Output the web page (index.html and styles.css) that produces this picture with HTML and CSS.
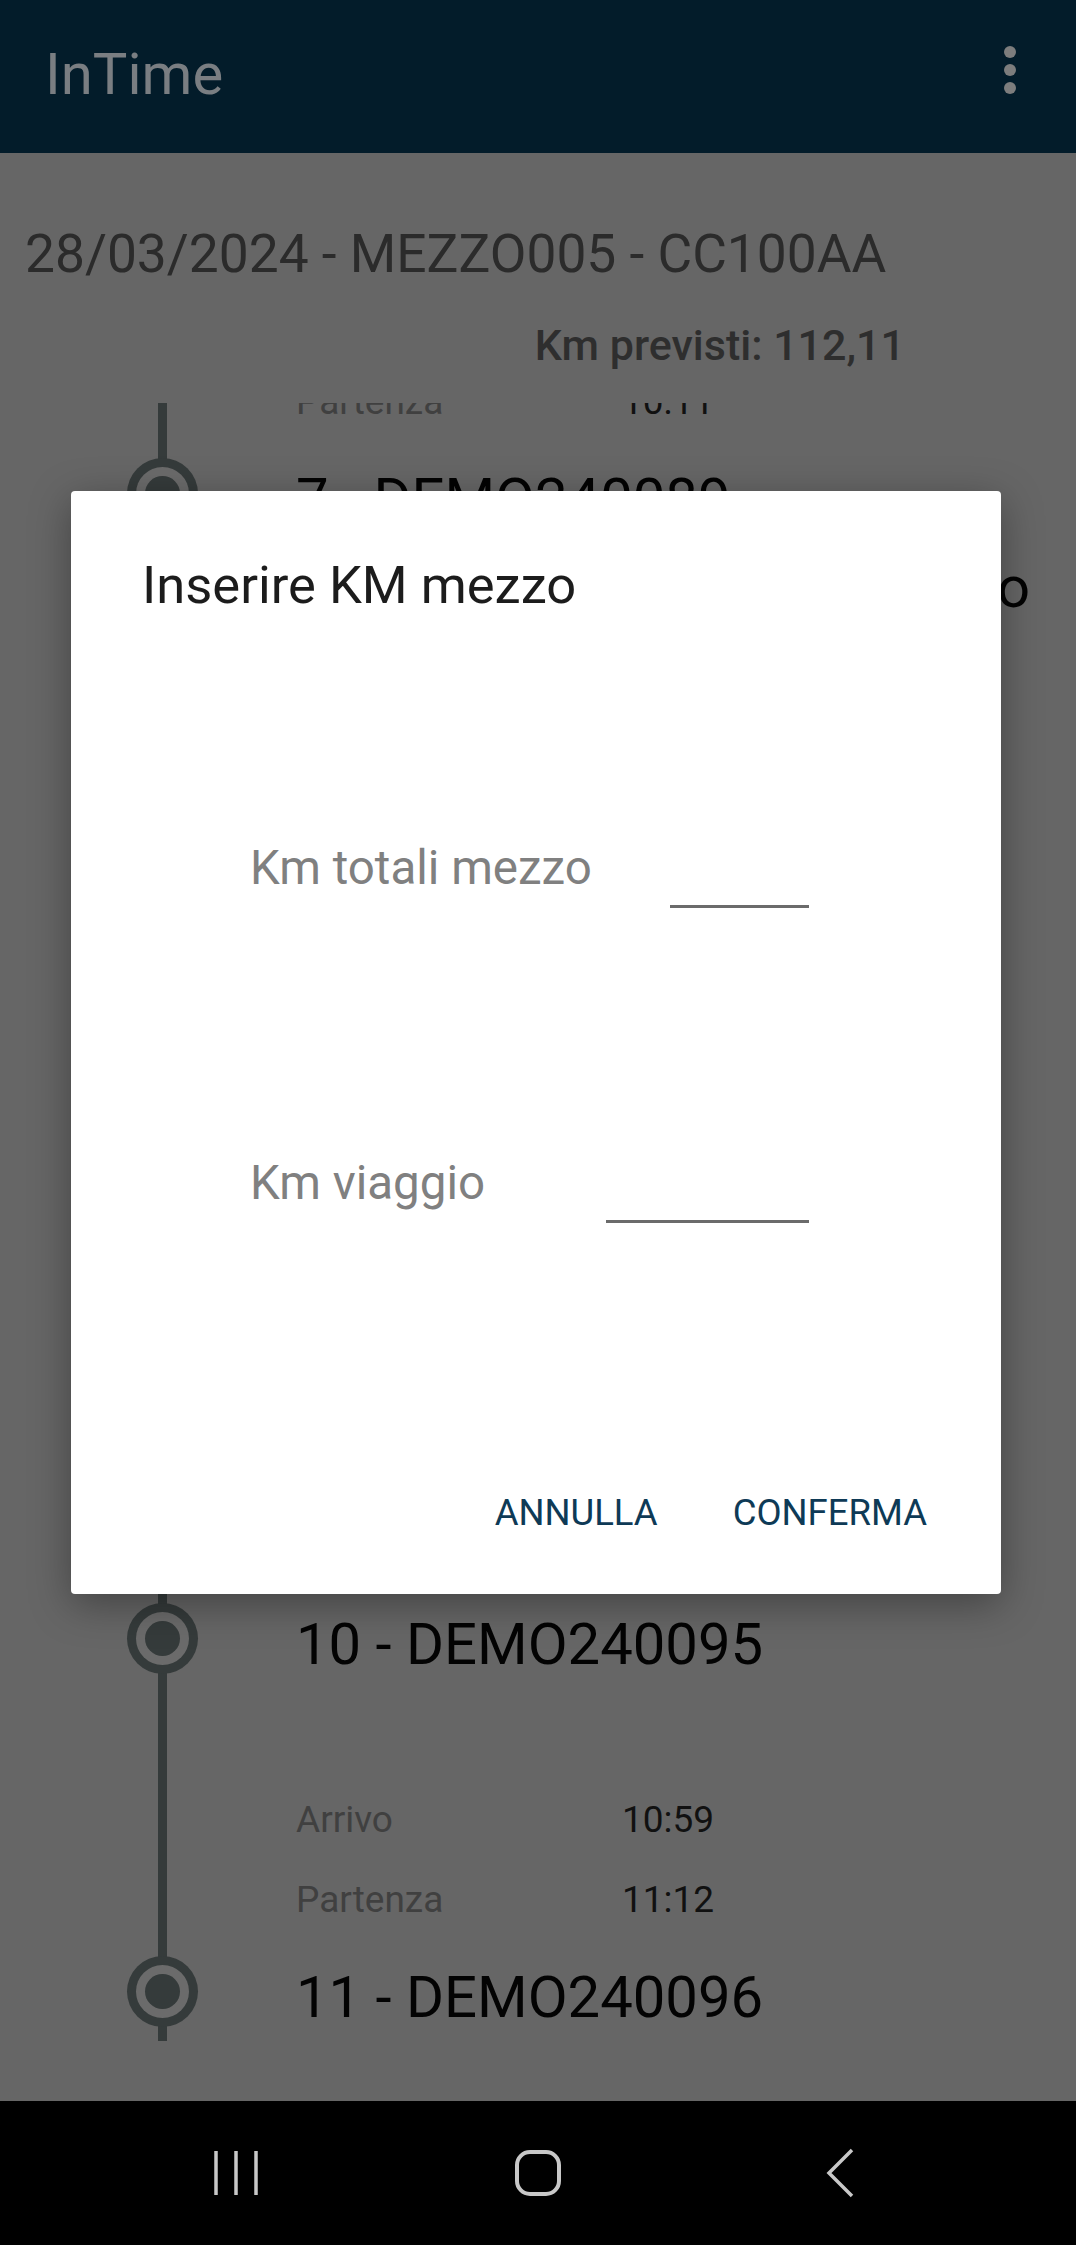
FILE: index.html
```html
<!DOCTYPE html>
<html>
<head>
	<meta charset="utf-8">
	<title>InTime</title>
	<link rel="stylesheet" href="styles.css">
</head>
<body>
<div class="phone">
	<div class="screen">
		<div class="toolbar">
			<div class="app-title">InTime</div>
			<div class="kebab"><span></span><span></span><span></span></div>
		</div>

		<div class="trip-head">28/03/2024 - MEZZO005 - CC100AA</div>
		<div class="km">Km previsti: 112,11</div>

		<div class="timeline">
			<div class="stops">
				<div class="row time-row"><div class="rail"></div><div><span class="label">Partenza</span><span class="time">10:11</span></div></div>
				<div class="row title-row"><div class="rail"><div class="node"></div></div><div>7 - DEMO240089</div></div>
				<div class="row extra-row"><div class="rail"></div><div class="extra">Arezzo</div></div>
				<div class="row spacer-lg"><div class="rail"></div><div></div></div>

				<div class="row time-row"><div class="rail"></div><div><span class="label">Arrivo</span><span class="time">10:24</span></div></div>
				<div class="row time-row"><div class="rail"></div><div><span class="label">Partenza</span><span class="time">10:30</span></div></div>
				<div class="row title-row"><div class="rail"><div class="node"></div></div><div>8 - DEMO240091</div></div>
				<div class="row spacer"><div class="rail"></div><div></div></div>

				<div class="row time-row"><div class="rail"></div><div><span class="label">Arrivo</span><span class="time">10:38</span></div></div>
				<div class="row time-row"><div class="rail"></div><div><span class="label">Partenza</span><span class="time">10:44</span></div></div>
				<div class="row title-row"><div class="rail"><div class="node"></div></div><div>9 - DEMO240093</div></div>
				<div class="row spacer"><div class="rail"></div><div></div></div>

				<div class="row time-row"><div class="rail"></div><div><span class="label">Arrivo</span><span class="time">10:49</span></div></div>
				<div class="row time-row"><div class="rail"></div><div><span class="label">Partenza</span><span class="time">10:53</span></div></div>
				<div class="row title-row"><div class="rail"><div class="node"></div></div><div>10 - DEMO240095</div></div>
				<div class="row spacer"><div class="rail"></div><div></div></div>

				<div class="row time-row"><div class="rail"></div><div><span class="label">Arrivo</span><span class="time">10:59</span></div></div>
				<div class="row time-row"><div class="rail"></div><div><span class="label">Partenza</span><span class="time">11:12</span></div></div>
				<div class="row title-row last"><div class="rail"><div class="node"></div></div><div>11 - DEMO240096</div></div>
			</div>
		</div>

		<div class="overlay">
			<div class="dialog">
				<div class="dialog-title">Inserire KM mezzo</div>
				<div class="fields">
					<div class="field">
						<label>Km totali mezzo</label>
						<input type="text" class="input-short">
					</div>
					<div class="field">
						<label>Km viaggio</label>
						<input type="text" class="input-long">
					</div>
				</div>
				<div class="actions">
					<button>ANNULLA</button>
					<button>CONFERMA</button>
				</div>
			</div>
		</div>
	</div>

	<div class="navbar">
		<div class="nav-btn">
			<svg width="46" height="46" viewBox="0 0 46 46"><path d="M3 1V45M23 1V45M43 1V45" stroke="#c8c8c8" stroke-width="3.5" fill="none"/></svg>
		</div>
		<div class="nav-btn">
			<svg width="50" height="50" viewBox="0 0 50 50"><rect x="4" y="4" width="42" height="42" rx="13" stroke="#c8c8c8" stroke-width="4" fill="none"/></svg>
		</div>
		<div class="nav-btn">
			<svg width="32" height="50" viewBox="0 0 32 50"><path d="M28 2L5 25L28 48" stroke="#c8c8c8" stroke-width="3.5" fill="none"/></svg>
		</div>
	</div>
</div>
</body>
</html>
```
FILE: styles.css
```css
*{
	box-sizing: border-box;
}
body{
	margin: 0;
	width: 1076px;
	height: 2245px;
	overflow: hidden;
	background: #000;
	font-family: Roboto, "Liberation Sans", sans-serif;
}
.phone{
	display: flex;
	flex-direction: column;
	height: 2245px;
}
.screen{
	position: relative;
	flex: 1;
	display: flex;
	flex-direction: column;
	background: #666;
	overflow: hidden;
}

/* barra in alto */
.toolbar{
	flex: none;
	height: 153px;
	background: #031c2a;
	display: flex;
	align-items: center;
	justify-content: space-between;
	padding: 0 60px 6px 45px;
}
.app-title{
	font-size: 58px;
	line-height: 70px;
	color: #7a7e82;
}
.kebab{
	display: flex;
	flex-direction: column;
	gap: 6px;
	margin-bottom: 7px;
}
.kebab span{
	width: 12px;
	height: 12px;
	border-radius: 50%;
	background: #7d7d7d;
}

.trip-head{
	padding: 69px 0 0 25px;
	font-size: 53.3px;
	line-height: 64px;
	color: #2b2b2b;
}
.km{
	margin-top: 33px;
	padding-right: 171px;
	text-align: right;
	font-size: 43px;
	line-height: 52px;
	font-weight: 500;
	color: #2e2e2e;
}

/* lista fermate */
.timeline{
	flex: 1;
	margin-top: 32px;
	overflow: hidden;
}
.stops{
	margin-top: -41px;
}
.row{
	display: grid;
	grid-template-columns: 296px 1fr;
}
.rail{
	display: flex;
	align-items: center;
	padding-bottom: 11px;
	background: linear-gradient(#353b3b, #353b3b) 158px 0 / 9px 100% no-repeat;
}
.last .rail{
	background-size: 9px 101px;
}
.node{
	width: 35px;
	height: 35px;
	margin-left: 145px;
	border-radius: 50%;
	background: #353b3b;
	box-shadow: 0 0 0 9px #6b6b6b, 0 0 0 18px #353b3b;
}
.time-row{
	height: 80px;
	line-height: 80px;
	font-size: 37px;
}
.label{
	display: inline-block;
	width: 326px;
	color: #404040;
}
.time{
	color: #111;
}
.title-row{
	height: 114px;
	line-height: 114px;
	font-size: 58px;
	color: #030303;
}
.extra-row{
	height: 62px;
	line-height: 62px;
	font-size: 58px;
	color: #030303;
}
.extra{
	text-align: right;
	padding-right: 46px;
}
.spacer{
	height: 79px;
}
.spacer-lg{
	height: 103px;
}

/* dialog */
.overlay{
	position: absolute;
	top: 0;
	left: 0;
	right: 0;
	bottom: 0;
	display: flex;
	align-items: flex-start;
	padding: 491px 0 0 71px;
}
.dialog{
	width: 930px;
	background: #fff;
	border-radius: 4px;
	box-shadow: 0 10px 40px rgba(0,0,0,.35);
	padding: 64px 0 37px;
}
.dialog-title{
	padding-left: 71px;
	font-size: 52.5px;
	line-height: 60px;
	color: #1c1c1c;
}
.fields{
	display: flex;
	flex-direction: column;
	gap: 245px;
	margin-top: 223px;
	padding: 0 192px 0 179px;
}
.field{
	display: flex;
	align-items: flex-end;
	justify-content: space-between;
	height: 70px;
}
.field label{
	margin-bottom: 10px;
	font-size: 47.5px;
	line-height: 60px;
	color: #808080;
}
.field input{
	height: 70px;
	padding: 0;
	border: none;
	border-bottom: 3px solid #6b6b6b;
	background: transparent;
	font-family: inherit;
	font-size: 46px;
	outline: none;
}
.input-short{
	width: 139px;
}
.input-long{
	width: 203px;
}
.actions{
	display: flex;
	justify-content: flex-end;
	gap: 25px;
	margin-top: 246px;
	padding-right: 49px;
}
.actions button{
	height: 88px;
	padding: 0 25px;
	border: none;
	background: none;
	font-family: inherit;
	font-size: 36.5px;
	line-height: 88px;
	color: #0e3a56;
	cursor: pointer;
}

/* barra di navigazione */
.navbar{
	flex: none;
	height: 144px;
	background: #000;
	display: flex;
	justify-content: center;
	align-items: center;
	gap: 182px;
}
.nav-btn{
	width: 120px;
	display: flex;
	justify-content: center;
}
```
